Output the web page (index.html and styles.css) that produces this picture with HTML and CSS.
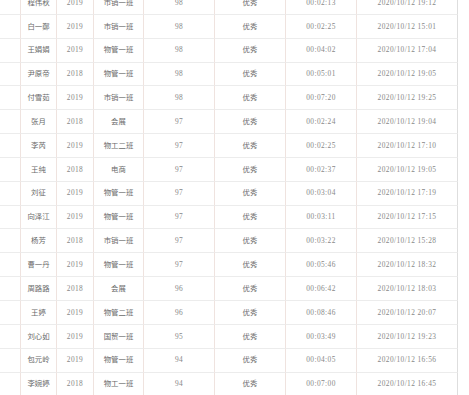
FILE: index.html
```html
<!DOCTYPE html>
<html lang="zh">
<head>
<meta charset="utf-8">
<link rel="stylesheet" href="styles.css">
</head>
<body>
<div class="sheet">
  <div class="row"><div class="c"></div><div class="c">程伟秋</div><div class="c n">2019</div><div class="c">市销一班</div><div class="c n">98</div><div class="c">优秀</div><div class="c n">00:02:13</div><div class="c n">2020/10/12 19:12</div></div>
  <div class="row"><div class="c"></div><div class="c">白一鄭</div><div class="c n">2019</div><div class="c">市销一班</div><div class="c n">98</div><div class="c">优秀</div><div class="c n">00:02:25</div><div class="c n">2020/10/12 15:01</div></div>
  <div class="row"><div class="c"></div><div class="c">王娟娟</div><div class="c n">2019</div><div class="c">物管一班</div><div class="c n">98</div><div class="c">优秀</div><div class="c n">00:04:02</div><div class="c n">2020/10/12 17:04</div></div>
  <div class="row"><div class="c"></div><div class="c">尹原帝</div><div class="c n">2018</div><div class="c">物管一班</div><div class="c n">98</div><div class="c">优秀</div><div class="c n">00:05:01</div><div class="c n">2020/10/12 19:05</div></div>
  <div class="row"><div class="c"></div><div class="c">付雪茹</div><div class="c n">2019</div><div class="c">市销一班</div><div class="c n">98</div><div class="c">优秀</div><div class="c n">00:07:20</div><div class="c n">2020/10/12 19:25</div></div>
  <div class="row"><div class="c"></div><div class="c">张月</div><div class="c n">2018</div><div class="c">会展</div><div class="c n">97</div><div class="c">优秀</div><div class="c n">00:02:24</div><div class="c n">2020/10/12 19:04</div></div>
  <div class="row"><div class="c"></div><div class="c">李芮</div><div class="c n">2019</div><div class="c">物工二班</div><div class="c n">97</div><div class="c">优秀</div><div class="c n">00:02:25</div><div class="c n">2020/10/12 17:10</div></div>
  <div class="row"><div class="c"></div><div class="c">王纯</div><div class="c n">2018</div><div class="c">电商</div><div class="c n">97</div><div class="c">优秀</div><div class="c n">00:02:37</div><div class="c n">2020/10/12 19:05</div></div>
  <div class="row"><div class="c"></div><div class="c">刘征</div><div class="c n">2019</div><div class="c">物管一班</div><div class="c n">97</div><div class="c">优秀</div><div class="c n">00:03:04</div><div class="c n">2020/10/12 17:19</div></div>
  <div class="row"><div class="c"></div><div class="c">向泽江</div><div class="c n">2019</div><div class="c">物管一班</div><div class="c n">97</div><div class="c">优秀</div><div class="c n">00:03:11</div><div class="c n">2020/10/12 17:15</div></div>
  <div class="row"><div class="c"></div><div class="c">杨芳</div><div class="c n">2018</div><div class="c">市销一班</div><div class="c n">97</div><div class="c">优秀</div><div class="c n">00:03:22</div><div class="c n">2020/10/12 15:28</div></div>
  <div class="row"><div class="c"></div><div class="c">曹一丹</div><div class="c n">2019</div><div class="c">物管一班</div><div class="c n">97</div><div class="c">优秀</div><div class="c n">00:05:46</div><div class="c n">2020/10/12 18:32</div></div>
  <div class="row"><div class="c"></div><div class="c">周路路</div><div class="c n">2018</div><div class="c">会展</div><div class="c n">96</div><div class="c">优秀</div><div class="c n">00:06:42</div><div class="c n">2020/10/12 18:03</div></div>
  <div class="row"><div class="c"></div><div class="c">王婷</div><div class="c n">2019</div><div class="c">物管二班</div><div class="c n">96</div><div class="c">优秀</div><div class="c n">00:08:46</div><div class="c n">2020/10/12 20:07</div></div>
  <div class="row"><div class="c"></div><div class="c">刘心如</div><div class="c n">2019</div><div class="c">国贸一班</div><div class="c n">95</div><div class="c">优秀</div><div class="c n">00:03:49</div><div class="c n">2020/10/12 19:23</div></div>
  <div class="row"><div class="c"></div><div class="c">包元岭</div><div class="c n">2019</div><div class="c">物管一班</div><div class="c n">94</div><div class="c">优秀</div><div class="c n">00:04:05</div><div class="c n">2020/10/12 16:56</div></div>
  <div class="row"><div class="c"></div><div class="c">李婉婷</div><div class="c n">2018</div><div class="c">物工一班</div><div class="c n">94</div><div class="c">优秀</div><div class="c n">00:07:00</div><div class="c n">2020/10/12 16:45</div></div>
</div>
</body>
</html>
```

FILE: styles.css
```css
html, body {
  margin: 0;
  padding: 0;
  background: #ffffff;
  overflow: hidden;
}
.sheet {
  margin-top: -9px;
  width: 458px;
  font-family: "Liberation Serif", "Noto Sans CJK SC", serif;
  font-size: 7.4px;
  color: #6a6a6a;
}
.row {
  display: grid;
  grid-template-columns: 21px 36px 37px 50px 71px 71px 71px 101px;
  height: 23.85px;
}
.c {
  box-sizing: border-box;
  display: flex;
  align-items: center;
  justify-content: center;
  border-right: 1px solid #efe3df;
  border-bottom: 1px solid #ececec;
  white-space: nowrap;
  line-height: 1;
  color: #6a6a6a;
  -webkit-text-fill-color: #6a6a6a;
}
.c:last-child {
  border-right-color: #dedede;
}
.c.n {
  letter-spacing: 0.4px;
  color: #888888;
  -webkit-text-fill-color: #888888;
}
```
